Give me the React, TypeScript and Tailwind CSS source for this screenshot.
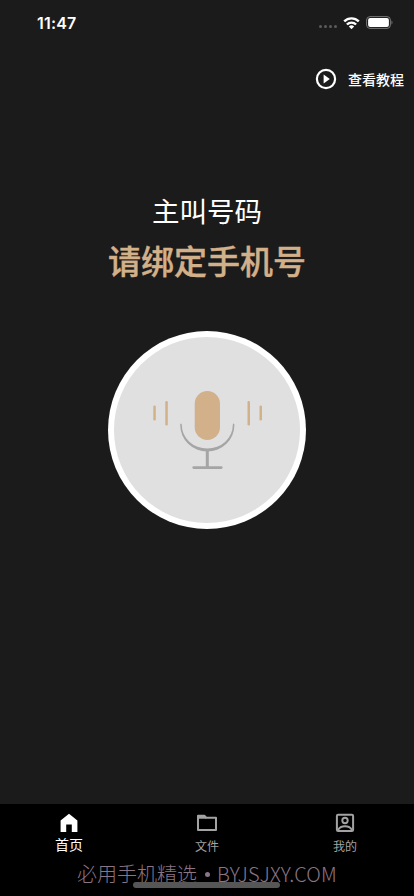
import type { ReactNode } from 'react';

export default function App() {
  return (
    <div className="h-[896px] w-[414px] flex flex-col overflow-hidden bg-[#1b1b1b] text-white font-['Noto_Sans_CJK_SC',sans-serif]">
      <StatusBar />
      <header className="flex h-[22px] mt-[24px] items-center justify-end pr-[10px]">
        <button className="flex items-center gap-[11.5px]">
          <svg className="h-[22px] w-[22px]" viewBox="0 0 22 22">
            <circle cx="11" cy="11" r="9.1" fill="none" stroke="white" strokeWidth="2.2" />
            <path d="M8.6 6.6v8.8l6.2-4.4z" fill="white" />
          </svg>
          <span className="text-[14px] leading-[20px] pb-px font-medium">查看教程</span>
        </button>
      </header>

      <main className="flex-1 flex flex-col items-center pt-[100px]">
        <h2 className="text-[27.5px] leading-[40px] font-normal">主叫号码</h2>
        <h1 className="mt-[6px] text-[33px] leading-[48px] font-medium text-[#d2b08a] [-webkit-text-stroke:0.4px_#d2b08a]">
          请绑定手机号
        </h1>
        <button className="mt-[47px]" title="录音">
          <Microphone />
        </button>
      </main>

      <nav className="relative h-[92px] bg-black">
        <div className="grid grid-cols-3">
          <Tab label="首页" active>
            <path d="M11 1.7 2.6 8.4v11.7h5.6v-7.500h5.6v7.500h5.6V8.400z" fill="currentColor" />
          </Tab>
          <Tab label="文件">
            <path d="M2 18V3.800h6.300l2 2H20V18z" fill="none" stroke="currentColor" strokeWidth="2" strokeLinejoin="round" />
            <path d="M2 3.500h6.500l2 3.200H2z" fill="currentColor" />
          </Tab>
          <Tab label="我的">
            <rect x="2.900" y="2.700" width="16.200" height="16.200" rx="1.200" fill="none" stroke="currentColor" strokeWidth="2" />
            <circle cx="11" cy="8.500" r="2.700" fill="none" stroke="currentColor" strokeWidth="1.900" />
            <path d="M4 18c1.300-2.400 4-3.700 7-3.700s5.700 1.300 7 3.700" fill="none" stroke="currentColor" strokeWidth="2" />
          </Tab>
        </div>
        <div className="absolute left-[77px] top-[56px] flex items-center h-[28px] whitespace-nowrap text-[20px] font-light text-[#8a7587]">
          <span>必用手机精选</span>
          <span className="ml-[8px] mr-[7px] h-[5px] w-[5px] rounded-full bg-[#8a7587]" />
          <span className="tracking-[0.1px]">BYJSJXY.COM</span>
        </div>
        <div className="absolute left-[133px] top-[78px] h-[5.500px] w-[147px] rounded-full bg-[#565656]" />
      </nav>
    </div>
  );
}

function StatusBar() {
  return (
    <div className="flex h-[44px] items-center justify-between pl-[37px] pr-[21px] pt-[2px]">
      <span className="font-['Inter',sans-serif] text-[16px] tracking-[0.2px] font-semibold leading-none pb-px">11:47</span>
      <div className="flex items-center">
        <div className="flex gap-[1.500px] mr-[6px] mt-[7px]">
          {[0, 1, 2, 3].map((dot) => (
            <i key={dot} className="h-[3.500px] w-[3.500px] rounded-full bg-[#5c5c5c]" />
          ))}
        </div>
        <svg className="h-[12px] w-[17px] mr-[6px] mb-px" viewBox="0 0 17 12" fill="none" stroke="white" strokeWidth="2.400">
          <path d="M1.200 4.400a10.300 10.300 0 0 1 14.600 0" />
          <path d="M3.900 7.500a6.500 6.500 0 0 1 9.200 0" />
          <path d="M8.500 12.200 5.800 9.600a3.800 3.800 0 0 1 5.400 0z" fill="white" stroke="none" />
        </svg>
        <svg className="h-[13px] w-[27px] mb-px" viewBox="0 0 27 13">
          <rect x=".6" y=".6" width="23.800" height="11.800" rx="3.400" fill="none" stroke="#777" />
          <rect x="2.100" y="2.100" width="20.800" height="8.800" rx="2" fill="white" />
          <path d="M25.500 4.500v4c1.300-.7 1.300-3.300 0-4z" fill="#777" />
        </svg>
      </div>
    </div>
  );
}

function Microphone() {
  return (
    <svg className="block h-[198px] w-[198px]" viewBox="0 0 198 198">
      <circle cx="99" cy="99" r="99" fill="#fff" />
      <circle cx="99" cy="99" r="93" fill="#e0e0e0" />
      <g fill="#d2b08a">
        <rect x="86.700" y="60" width="25.300" height="49" rx="12.650" />
        <rect x="45.300" y="74.500" width="2.500" height="15" rx="1.200" />
        <rect x="57.300" y="70" width="2.500" height="24.500" rx="1.200" />
        <rect x="139.500" y="70" width="2.500" height="24.500" rx="1.200" />
        <rect x="151.500" y="74.500" width="2.500" height="15" rx="1.200" />
      </g>
      <g fill="#a5a5a5">
        <path d="M72.200 94q0-1.500.8-1.500t.8 1.500a25.500 23.600 0 0 0 51 0q0-1.500.8-1.500t.8 1.500a27.100 26.500 0 0 1-54.200 0z" />
        <rect x="97.800" y="119" width="3" height="18" />
        <rect x="84.400" y="135.200" width="30.200" height="2.700" rx="1.300" />
      </g>
    </svg>
  );
}

function Tab({ label, active, children }: TabProps) {
  return (
    <button className={`flex flex-col items-center pt-[8px] ${active ? 'text-white' : 'text-[#a3a3a3]'}`}>
      <svg className="h-[22px] w-[22px]" viewBox="0 0 22 22">
        {children}
      </svg>
      <span className={active ? 'text-[14px] leading-[21px]' : 'text-[12px] leading-[23px]'}>{label}</span>
    </button>
  );
}

interface TabProps {
  label: string;
  active?: boolean;
  children: ReactNode;
}
